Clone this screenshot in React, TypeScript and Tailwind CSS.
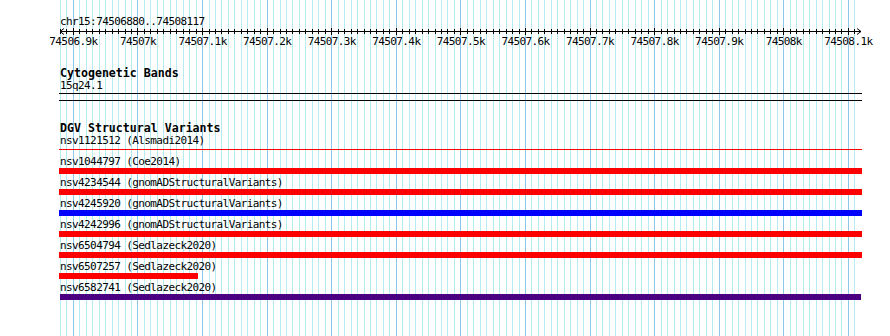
import React from 'react';

const START = 74506880;
const END = 74508117;
const X0 = 60;
const SCALE = 0.6458;

const px = (bp: number) => X0 + (bp - START) * SCALE;
const crisp = (x: number) => Math.round(x) + 0.5;

const gridStops: number[] = [];
for (let bp = START; bp <= END; bp += 10) gridStops.push(bp);

const rulerLabels = [
  '74506.9k', '74507k', '74507.1k', '74507.2k', '74507.3k', '74507.4k', '74507.5k',
  '74507.6k', '74507.7k', '74507.8k', '74507.9k', '74508k', '74508.1k',
];

type Feature = { name: string; bar: string };

const features: Feature[] = [
  { name: 'nsv1121512 (Alsmadi2014)', bar: 'w-full h-[1px] mt-[2px] bg-[#ff0000]' },
  { name: 'nsv1044797 (Coe2014)', bar: 'w-full h-[6px] bg-[#ff0000]' },
  { name: 'nsv4234544 (gnomADStructuralVariants)', bar: 'w-full h-[6px] bg-[#ff0000]' },
  { name: 'nsv4245920 (gnomADStructuralVariants)', bar: 'w-full h-[6px] bg-[#0000ff]' },
  { name: 'nsv4242996 (gnomADStructuralVariants)', bar: 'w-full h-[6px] bg-[#ff0000]' },
  { name: 'nsv6504794 (Sedlazeck2020)', bar: 'w-full h-[6px] bg-[#ff0000]' },
  { name: 'nsv6507257 (Sedlazeck2020)', bar: 'w-[139px] h-[6px] bg-[#ff0000]' },
  { name: 'nsv6582741 (Sedlazeck2020)', bar: 'ml-[1px] w-[801px] h-[6px] bg-[#4b0082]' },
];

// background grid: light line every 10bp, darker one every 100bp
const GridLines = () => (
  <svg className="absolute inset-0" width={890} height={336} shapeRendering="crispEdges">
    {gridStops.map((bp) => (
      <line
        key={bp}
        x1={crisp(px(bp))}
        x2={crisp(px(bp))}
        y1={0}
        y2={336}
        stroke={bp % 100 === 0 ? '#8cc8ea' : '#b4ecf2'}
        strokeWidth={1}
      />
    ))}
  </svg>
);

// scale bar with ticks and kb labels (svg top sits at y=28)
const Ruler = () => {
  const y = 3.5;
  const left = X0;
  const right = 861;
  return (
    <svg width={890} height={20} className="block -ml-[59px]" shapeRendering="crispEdges">
      <line x1={left} x2={right} y1={y} y2={y} stroke="#000" />
      <polyline points={`${left + 4},${y - 3} ${left},${y} ${left + 4},${y + 3}`} fill="none" stroke="#000" shapeRendering="auto" />
      <polyline points={`${right - 4},${y - 3} ${right},${y} ${right - 4},${y + 3}`} fill="none" stroke="#000" shapeRendering="auto" />
      {gridStops.map((bp) => {
        const major = bp % 100 === 0;
        return (
          <line
            key={bp}
            x1={crisp(px(bp))}
            x2={crisp(px(bp))}
            y1={major ? 0 : 1}
            y2={major ? 7 : 6}
            stroke="#000"
          />
        );
      })}
      {rulerLabels.map((label, i) => (
        <text
          key={label}
          x={px(74506900 + i * 100) + 0.5}
          y={16.5}
          textAnchor="middle"
          fontSize={11}
          letterSpacing={-0.6}
          fontFamily="'DejaVu Sans Mono', monospace"
          fill="#000"
        >
          {label}
        </text>
      ))}
    </svg>
  );
};

const App = () => {
  return (
    <div className="relative w-[890px] h-[336px] bg-white overflow-hidden text-black font-['DejaVu_Sans_Mono',monospace] text-[11px] tracking-[-0.6px]">
      <GridLines />

      <div className="relative flex flex-col pl-[59px] w-[862px] pt-[16px]">
        <div className="h-[12px] leading-[12px] pl-[1px]">chr15:74506880..74508117</div>
        <Ruler />

        {/* Cytogenetic Bands */}
        <div className="mt-[19px] h-[13px] leading-[12px] pl-[1px] font-bold text-[11.6px] tracking-normal">Cytogenetic Bands</div>
        <div className="h-[13px] leading-[12px] pl-[1px]">15q24.1</div>
        <div className="h-[8px] w-full border-y border-black" />

        {/* DGV Structural Variants */}
        <div className="mt-[21px] h-[13px] leading-[12px] pl-[1px] font-bold text-[11.6px] tracking-normal">DGV Structural Variants</div>
        <div className="flex flex-col">
          {features.map((f) => (
            <div key={f.name} className="h-[21px] flex flex-col">
              <div className="h-[12px] leading-[12px] pl-[1px] whitespace-nowrap">{f.name}</div>
              <div className="h-[6px]">
                <div className={f.bar} />
              </div>
            </div>
          ))}
        </div>
      </div>
    </div>
  );
};

export default App;
